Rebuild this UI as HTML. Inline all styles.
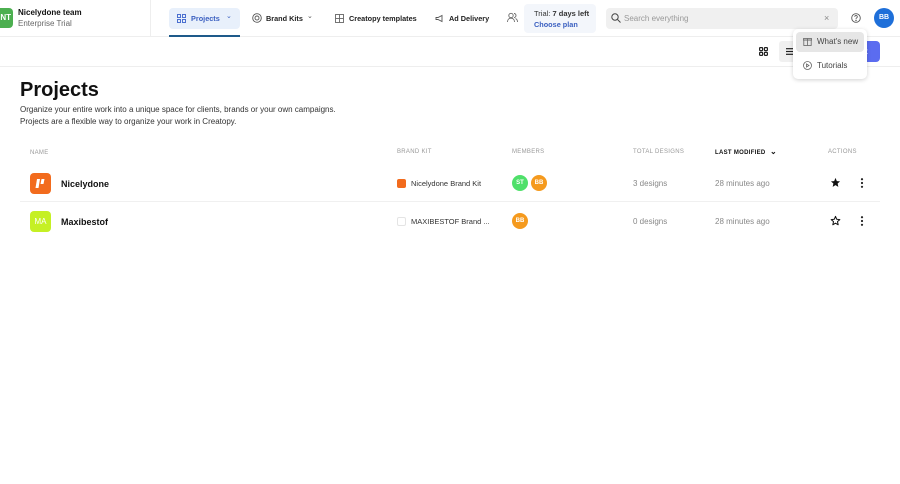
<!DOCTYPE html>
<html><head><meta charset="utf-8"><style>
*{box-sizing:border-box;margin:0;padding:0}
body{width:900px;height:484px;background:#fff;font-family:"Liberation Sans",sans-serif;color:#111;position:relative;overflow:hidden}
.a{position:absolute}
.nav{font-size:7.3px;font-weight:bold;color:#222}
.hdr{font-size:6px;color:#999;letter-spacing:.3px}
.cell{font-size:8px;color:#888}
</style></head><body>
<div class="a" style="left:0;top:0;width:900px;height:37px;border-bottom:1px solid #eee"></div>
<div class="a" style="left:150px;top:0;width:1px;height:37px;background:#eee"></div>
<div class="a" style="left:-8px;top:8px;width:21px;height:20px;background:#4caf50;border-radius:4px;color:#fff;font-size:8px;font-weight:bold;line-height:20px;text-align:right;padding-right:2px">NT</div>
<div class="a" style="left:18px;top:8px;font-size:8px;font-weight:bold">Nicelydone team</div>
<div class="a" style="left:18px;top:19px;font-size:8px;color:#666">Enterprise Trial</div>

<div class="a" style="left:169px;top:8px;width:71px;height:21px;background:#e8f0fb;border-radius:4px"></div>
<div class="a" style="left:169px;top:35px;width:71px;height:2px;background:#1e5a8a"></div>
<svg class="a" style="left:177px;top:14px" width="9" height="9" viewBox="0 0 9 9" fill="none" stroke="#4a6fd0" stroke-width="1"><rect x="0.5" y="0.5" width="3" height="3"/><rect x="5.5" y="0.5" width="3" height="3"/><rect x="0.5" y="5.5" width="3" height="3"/><rect x="5.5" y="5.5" width="3" height="3"/></svg>
<div class="a nav" style="left:191px;top:14px;color:#3a5fc0">Projects</div>
<div class="a" style="left:226px;top:12px;font-size:7px;color:#3a5fc0">⌄</div>

<svg class="a" style="left:252px;top:13px" width="10" height="10" viewBox="0 0 10 10" fill="none" stroke="#555" stroke-width="0.9"><circle cx="5" cy="5" r="4.3"/><circle cx="5" cy="5" r="2"/></svg>
<div class="a nav" style="left:266px;top:14px">Brand Kits</div>
<div class="a" style="left:307px;top:12px;font-size:7px;color:#555">⌄</div>
<svg class="a" style="left:335px;top:14px" width="9" height="9" viewBox="0 0 9 9" fill="none" stroke="#666" stroke-width="0.9"><rect x="0.5" y="0.5" width="8" height="8"/><line x1="4.5" y1="0.5" x2="4.5" y2="8.5"/><line x1="0.5" y1="4.5" x2="8.5" y2="4.5"/></svg>
<div class="a nav" style="left:349px;top:14px">Creatopy templates</div>
<svg class="a" style="left:435px;top:14px" width="9" height="9" viewBox="0 0 9 9" fill="none" stroke="#555" stroke-width="0.9"><path d="M1 3.5h2l4-2v6l-4-2H1z"/></svg>
<div class="a nav" style="left:449px;top:14px">Ad Delivery</div>
<svg class="a" style="left:507px;top:12px" width="11" height="11" viewBox="0 0 11 11" fill="none" stroke="#666" stroke-width="0.9"><circle cx="4" cy="3.5" r="2.2"/><path d="M0.5 10c0-2.5 1.5-3.8 3.5-3.8S7.5 7.5 7.5 10"/><path d="M7 1.5a2 2 0 010 4M8.5 6.5c1.2.5 2 1.5 2 3.5"/></svg>
<div class="a" style="left:524px;top:4px;width:72px;height:29px;background:#f3f6fb;border-radius:4px"></div>
<div class="a" style="left:534px;top:9px;font-size:7.5px;color:#333">Trial: <b>7 days left</b></div>
<div class="a" style="left:534px;top:20px;font-size:7.3px;color:#3a5fc0;font-weight:bold">Choose plan</div>
<div class="a" style="left:606px;top:8px;width:232px;height:21px;background:#f0f0f0;border-radius:4px"></div>
<svg class="a" style="left:611px;top:13px" width="10" height="10" viewBox="0 0 10 10" fill="none" stroke="#444" stroke-width="1"><circle cx="4" cy="4" r="3.2"/><line x1="6.5" y1="6.5" x2="9.5" y2="9.5"/></svg>
<div class="a" style="left:624px;top:14px;font-size:8px;color:#999">Search everything</div>
<div class="a" style="left:824px;top:13px;font-size:9px;color:#888">×</div>
<svg class="a" style="left:851px;top:13px" width="10" height="10" viewBox="0 0 10 10" fill="none" stroke="#555" stroke-width="0.9"><circle cx="5" cy="5" r="4.3"/><path d="M3.7 3.8a1.3 1.3 0 112 1.1c-.5.3-.7.6-.7 1"/><circle cx="5" cy="7.4" r=".3" fill="#555"/></svg>
<div class="a" style="left:874px;top:8px;width:20px;height:20px;border-radius:50%;background:#1e6fd9;color:#fff;font-size:7px;font-weight:bold;text-align:center;line-height:20px">BB</div>

<div class="a" style="left:0;top:66px;width:900px;height:1px;background:#eee"></div>
<svg class="a" style="left:759px;top:47px" width="9" height="9" viewBox="0 0 9 9" fill="none" stroke="#222" stroke-width="1.2"><rect x="0.6" y="0.6" width="3" height="3" rx=".6"/><rect x="5.4" y="0.6" width="3" height="3" rx=".6"/><rect x="0.6" y="5.4" width="3" height="3" rx=".6"/><rect x="5.4" y="5.4" width="3" height="3" rx=".6"/></svg>
<div class="a" style="left:779px;top:41px;width:24px;height:21px;background:#f0f0f0;border-radius:3px"></div>
<svg class="a" style="left:786px;top:48px" width="8" height="7" viewBox="0 0 8 7" stroke="#222" stroke-width="1.2"><line x1="0" y1="0.7" x2="8" y2="0.7"/><line x1="0" y1="3.5" x2="8" y2="3.5"/><line x1="0" y1="6.3" x2="8" y2="6.3"/></svg>
<div class="a" style="left:850px;top:41px;width:30px;height:21px;background:#5b6cf0;border-radius:4px;color:#fff;font-size:8px;font-weight:bold;line-height:21px;padding-left:15px">t</div>

<div class="a" style="left:793px;top:29px;width:74px;height:50px;background:#fff;border-radius:5px;box-shadow:0 1px 4px rgba(0,0,0,.18)"></div>
<div class="a" style="left:796px;top:32px;width:68px;height:20px;background:#e6e6e6;border-radius:4px"></div>
<svg class="a" style="left:803px;top:37px" width="9" height="9" viewBox="0 0 9 9" fill="none" stroke="#666" stroke-width="0.8"><rect x="0.8" y="3" width="7.4" height="5.5"/><rect x="0.5" y="1.5" width="8" height="1.6"/><line x1="4.5" y1="1.5" x2="4.5" y2="8.5"/></svg>
<div class="a" style="left:817px;top:37px;font-size:8px;color:#444">What's new</div>
<svg class="a" style="left:803px;top:61px" width="9" height="9" viewBox="0 0 9 9" fill="none" stroke="#666" stroke-width="0.8"><circle cx="4.5" cy="4.5" r="4"/><path d="M3.5 3v3l2.5-1.5z"/></svg>
<div class="a" style="left:817px;top:61px;font-size:8px;color:#444">Tutorials</div>

<div class="a" style="left:20px;top:79px;font-size:20px;font-weight:bold">Projects</div>
<div class="a" style="left:20px;top:104px;font-size:8px;color:#333;line-height:12px">Organize your entire work into a unique space for clients, brands or your own campaigns.<br>Projects are a flexible way to organize your work in Creatopy.</div>

<div class="a hdr" style="left:30px;top:150px">NAME</div>
<div class="a hdr" style="left:397px;top:149px">BRAND KIT</div>
<div class="a hdr" style="left:512px;top:149px">MEMBERS</div>
<div class="a hdr" style="left:633px;top:149px">TOTAL DESIGNS</div>
<div class="a hdr" style="left:715px;top:150px;color:#111;font-weight:bold">LAST MODIFIED</div>
<div class="a" style="left:770px;top:147px;font-size:8px;font-weight:bold">⌄</div>
<div class="a hdr" style="left:828px;top:149px">ACTIONS</div>

<div class="a" style="left:30px;top:173px;width:21px;height:21px;background:#f26b1d;border-radius:4px"></div>
<svg class="a" style="left:34px;top:177px" width="13" height="13" viewBox="0 0 13 13" fill="#fff"><path d="M3 2h3l-1.5 9h-3zM7.5 2h3l-1 5h-3z"/></svg>
<div class="a" style="left:61px;top:179px;font-size:9px;font-weight:bold">Nicelydone</div>
<div class="a" style="left:397px;top:179px;width:9px;height:9px;background:#f26b1d;border-radius:2px"></div>
<div class="a cell" style="left:411px;top:179px;color:#333;font-size:7.5px">Nicelydone Brand Kit</div>
<div class="a" style="left:512px;top:175px;width:16px;height:16px;border-radius:50%;background:#4fe06a;color:#fff;font-size:6px;text-align:center;line-height:16px;font-weight:bold">ST</div>
<div class="a" style="left:531px;top:175px;width:16px;height:16px;border-radius:50%;background:#f59a1e;color:#fff;font-size:6px;text-align:center;line-height:16px;font-weight:bold">BB</div>
<div class="a cell" style="left:633px;top:179px">3 designs</div>
<div class="a cell" style="left:715px;top:179px">28 minutes ago</div>
<svg class="a" style="left:830px;top:177px" width="11" height="11" viewBox="0 0 24 24"><path d="M12 2l2.9 6.9 7.1.6-5.4 4.7 1.6 7.3L12 17.8 5.8 21.5l1.6-7.3L2 9.5l7.1-.6z" fill="#111"/></svg>
<svg class="a" style="left:860px;top:178px" width="4" height="10" viewBox="0 0 4 10" fill="#222"><circle cx="2" cy="1.2" r="1.1"/><circle cx="2" cy="5" r="1.1"/><circle cx="2" cy="8.8" r="1.1"/></svg>
<div class="a" style="left:20px;top:201px;width:860px;height:1px;background:#f0f0f0"></div>

<div class="a" style="left:30px;top:211px;width:21px;height:21px;background:#c5f024;border-radius:4px;color:#fff;font-size:8px;line-height:21px;text-align:center">MA</div>
<div class="a" style="left:61px;top:217px;font-size:9px;font-weight:bold">Maxibestof</div>
<div class="a" style="left:397px;top:217px;width:9px;height:9px;border:1px solid #e4e4e4;border-radius:2px"></div>
<div class="a cell" style="left:411px;top:217px;color:#333;font-size:7.5px">MAXIBESTOF Brand ...</div>
<div class="a" style="left:512px;top:213px;width:16px;height:16px;border-radius:50%;background:#f59a1e;color:#fff;font-size:6px;text-align:center;line-height:16px;font-weight:bold">BB</div>
<div class="a cell" style="left:633px;top:217px">0 designs</div>
<div class="a cell" style="left:715px;top:217px">28 minutes ago</div>
<svg class="a" style="left:830px;top:215px" width="11" height="11" viewBox="0 0 24 24"><path d="M12 3l2.7 6.4 6.8.6-5.2 4.5 1.6 6.8L12 17.8 6.1 21.3l1.6-6.8L2.5 10l6.8-.6z" fill="none" stroke="#111" stroke-width="2.2" stroke-linejoin="round"/></svg>
<svg class="a" style="left:860px;top:216px" width="4" height="10" viewBox="0 0 4 10" fill="#222"><circle cx="2" cy="1.2" r="1.1"/><circle cx="2" cy="5" r="1.1"/><circle cx="2" cy="8.8" r="1.1"/></svg>
</body></html>
